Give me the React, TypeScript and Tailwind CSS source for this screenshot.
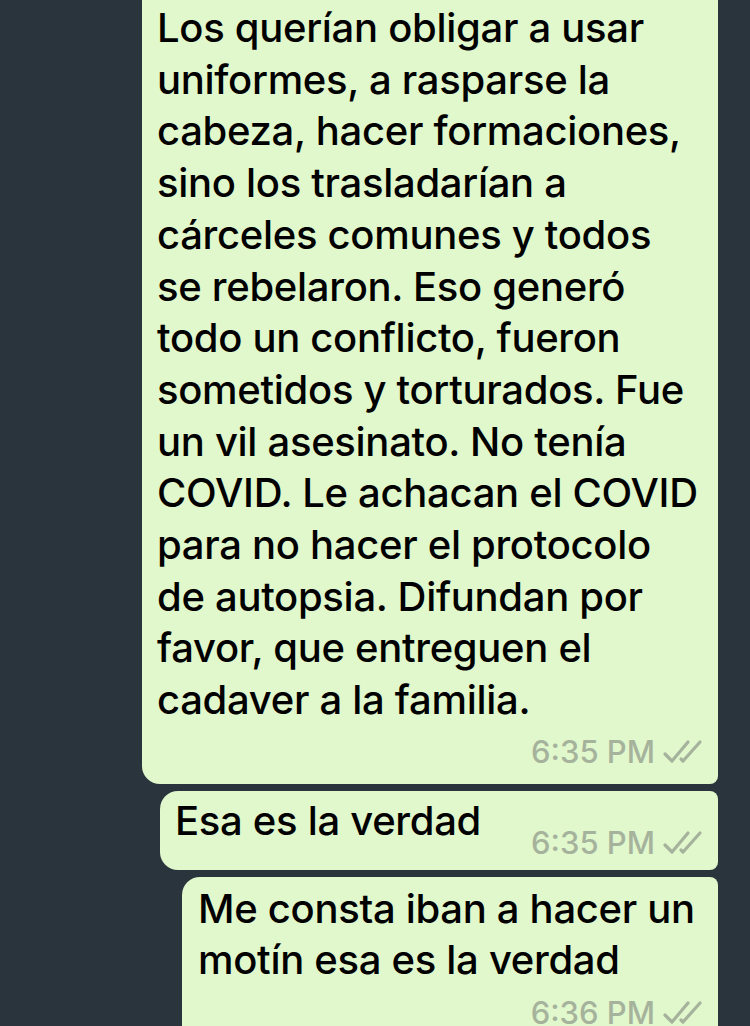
import React from 'react'

function Checks() {
  return (
    <svg width="44" height="26" viewBox="0 0 44 26" fill="none" className="shrink-0">
      <path d="M3 15 L10 22 L26 3" stroke="#a6b39c" strokeWidth="3.2" strokeLinecap="round" strokeLinejoin="round" />
      <path d="M19 20 L21 22 L38 3" stroke="#a6b39c" strokeWidth="3.2" strokeLinecap="round" strokeLinejoin="round" />
    </svg>
  )
}

function Time({ t, className = '' }: { t: string; className?: string }) {
  return (
    <div className={'flex items-center justify-end gap-[7px] pr-[12px] ' + className}>
      <span className="text-[31px] leading-[30px] font-medium text-[#a6b39c]">{t}</span>
      <Checks />
    </div>
  )
}

function Lines({ lines }: { lines: string[] }) {
  return (
    <div className="text-[40px] leading-[51.7px] font-medium text-black tracking-[-0.3px]">
      {lines.map((l, i) => (
        <div key={i} className="whitespace-nowrap">{l}</div>
      ))}
    </div>
  )
}

const first = [
  'Los querían obligar a usar',
  'uniformes, a rasparse la',
  'cabeza, hacer formaciones,',
  'sino los trasladarían a',
  'cárceles comunes y todos',
  'se rebelaron. Eso generó',
  'todo un conflicto, fueron',
  'sometidos y torturados. Fue',
  'un vil asesinato. No tenía',
  'COVID. Le achacan el COVID',
  'para no hacer el protocolo',
  'de autopsia. Difundan por',
  'favor, que entreguen el',
  'cadaver a la familia.',
]

export default function App() {
  return (
    <div
      className="w-[750px] h-[1026px] overflow-hidden bg-[#29343c] flex flex-col items-end pr-[32px]"
      style={{ fontFamily: 'Inter, "Liberation Sans", sans-serif' }}
    >
      <div className="w-[576px] -mt-[20px] bg-[#e1f7cc] rounded-l-[18px] rounded-tr-[18px] rounded-br-[8px] pl-[15px] pt-[22px] pb-[17px]">
        <Lines lines={first} />
        <Time t="6:35 PM" className="mt-[11px]" />
      </div>

      <div className="w-[558px] mt-[7px] bg-[#e1f7cc] rounded-l-[18px] rounded-r-[8px] pl-[15px] pt-[4px] pb-[12px]">
        <Lines lines={['Esa es la verdad']} />
        <Time t="6:35 PM" className="-mt-[19px]" />
      </div>

      <div className="w-[536px] mt-[7px] bg-[#e1f7cc] rounded-l-[18px] rounded-tr-[8px] rounded-br-[18px] pl-[16px] pt-[6px] pb-[30px]">
        <Lines lines={['Me consta iban a hacer un', 'motín esa es la verdad']} />
        <Time t="6:36 PM" className="mt-[12px]" />
      </div>
    </div>
  )
}
